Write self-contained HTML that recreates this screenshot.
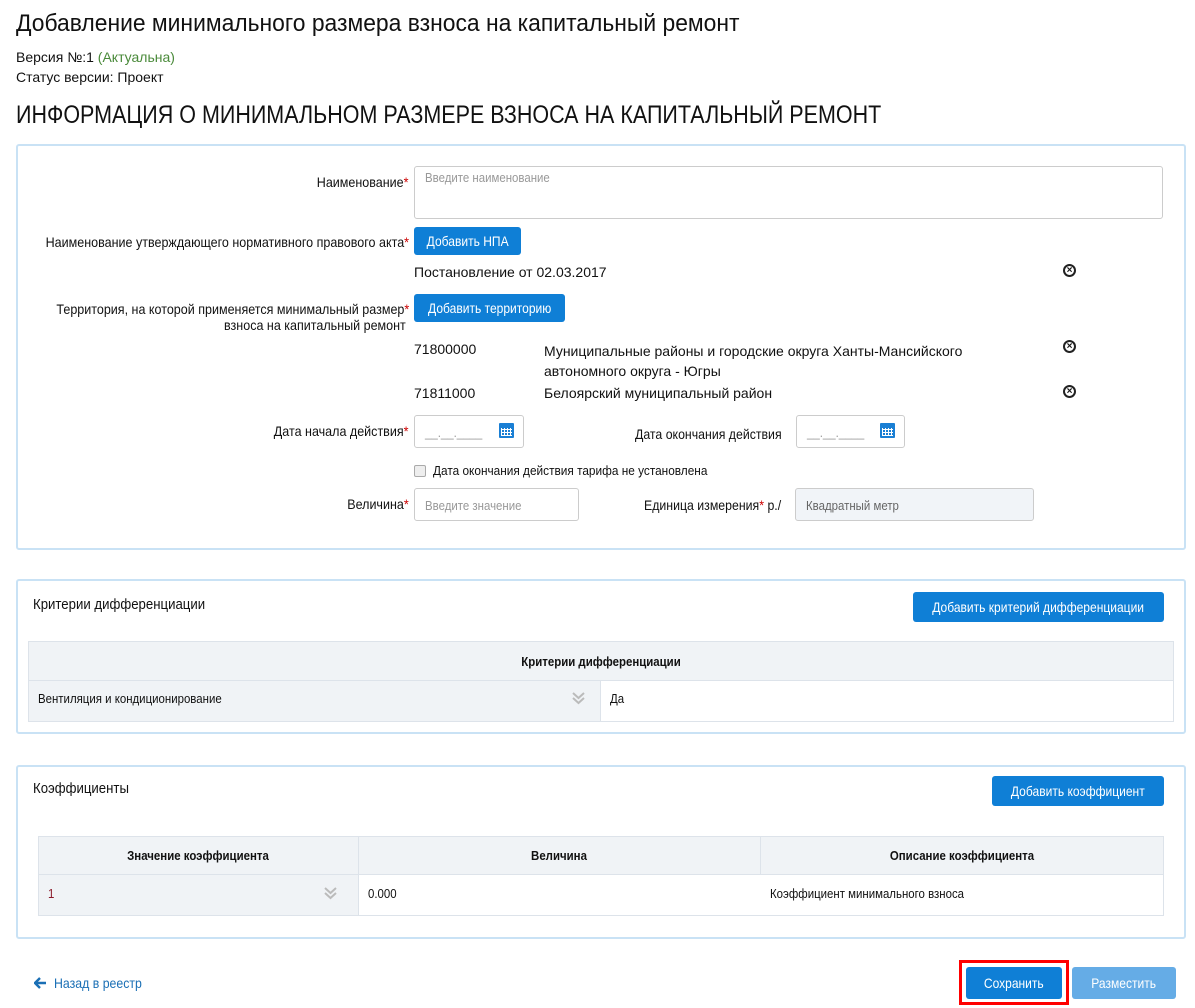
<!DOCTYPE html>
<html><head><meta charset="utf-8"><style>
*{box-sizing:border-box;margin:0;padding:0}
body{width:1195px;height:1008px;background:#fff;font-family:"Liberation Sans",sans-serif;color:#111;position:relative;overflow:hidden;font-size:14px}
.a{position:absolute;white-space:nowrap}
.n{transform:scaleX(.88);transform-origin:left center}
.nr{transform:scaleX(.895);transform-origin:right center}
.nc{transform:scaleX(.88);transform-origin:center center}
.box{position:absolute;border:2px solid #c9e2f5;border-radius:3px}
.btn{position:absolute;background:#0f7fd6;color:#fff;border-radius:3px;text-align:center;font-size:14px;white-space:nowrap}
.btn span{display:inline-block;transform:scaleX(.86)}
.inp{position:absolute;border:1px solid #ccc;border-radius:3px;background:#fff;color:#999;font-size:13px;padding-left:10px}
.inp span{display:inline-block;transform:scaleX(.88);transform-origin:left center}
.req{color:#c00}
.r{text-align:right}
.x{position:absolute;width:13px;height:13px;border:2px solid #222;border-radius:50%;font-size:10px;line-height:9px;text-align:center;font-weight:bold}
.cal{position:absolute;width:15px;height:15px;background:#1a7fd4;border-radius:1px}
.cal:after{content:"";position:absolute;left:2px;top:5px;width:11px;height:8px;background:repeating-linear-gradient(90deg,#fff 0 1px,transparent 1px 3px),repeating-linear-gradient(0deg,#fff 0 1px,transparent 1px 3px)}
</style></head><body>
<div class="a" style="left:16px;top:10px;font-size:24px;transform:scaleX(.953);transform-origin:left">Добавление минимального размера взноса на капитальный ремонт</div>
<div class="a" style="left:16px;top:49px;font-size:14px">Версия №:1 <span style="color:#4a8a3a">(Актуальна)</span></div>
<div class="a" style="left:16px;top:69px;font-size:14px">Статус версии: Проект</div>
<div class="a" style="left:16px;top:101px;font-size:25px;transform:scaleX(.86);transform-origin:left">ИНФОРМАЦИЯ О МИНИМАЛЬНОМ РАЗМЕРЕ ВЗНОСА НА КАПИТАЛЬНЫЙ РЕМОНТ</div>

<div class="box" style="left:16px;top:144px;width:1170px;height:406px"></div>
<div class="a r nr" style="right:786px;top:174px">Наименование<span class="req">*</span></div>
<div class="inp" style="left:414px;top:166px;width:749px;height:53px;padding-top:3px"><span>Введите наименование</span></div>
<div class="a r nr" style="right:786px;top:234px">Наименование утверждающего нормативного правового акта<span class="req">*</span></div>
<div class="btn" style="left:414px;top:227px;width:107px;height:28px;line-height:28px"><span>Добавить НПА</span></div>
<div class="a" style="left:414px;top:264px">Постановление от 02.03.2017</div>
<div class="x" style="left:1063px;top:264px">×</div>
<div class="a r nr" style="right:786px;top:301px;line-height:16px">Территория, на которой применяется минимальный размер<span class="req">*</span><br>взноса на капитальный ремонт&nbsp;</div>
<div class="btn" style="left:414px;top:294px;width:151px;height:28px;line-height:28px"><span>Добавить территорию</span></div>
<div class="a" style="left:414px;top:341px">71800000</div>
<div class="a" style="left:544px;top:341px;line-height:20px">Муниципальные районы и городские округа Ханты-Мансийского<br>автономного округа - Югры</div>
<div class="x" style="left:1063px;top:340px">×</div>
<div class="a" style="left:414px;top:385px">71811000</div>
<div class="a" style="left:544px;top:385px">Белоярский муниципальный район</div>
<div class="x" style="left:1063px;top:385px">×</div>
<div class="a r nr" style="right:786px;top:423px">Дата начала действия<span class="req">*</span></div>
<div class="inp" style="left:414px;top:415px;width:110px;height:33px;line-height:33px"><span>__.__.____</span></div>
<div class="cal" style="left:499px;top:423px"></div>
<div class="a n" style="left:635px;top:426px">Дата окончания действия</div>
<div class="inp" style="left:796px;top:415px;width:109px;height:33px;line-height:33px"><span>__.__.____</span></div>
<div class="cal" style="left:880px;top:423px"></div>
<div style="position:absolute;left:414px;top:465px;width:12px;height:12px;border:1px solid #aaa;border-radius:2px;background:#eee"></div>
<div class="a" style="left:433px;top:463px;font-size:13px;transform:scaleX(.91);transform-origin:left">Дата окончания действия тарифа не установлена</div>
<div class="a r nr" style="right:786px;top:496px">Величина<span class="req">*</span></div>
<div class="inp" style="left:414px;top:488px;width:165px;height:33px;line-height:33px"><span>Введите значение</span></div>
<div class="a n" style="left:644px;top:497px">Единица измерения<span class="req">*</span> р./</div>
<div class="inp" style="left:795px;top:488px;width:239px;height:33px;line-height:33px;background:#f1f4f8;color:#666"><span>Квадратный метр</span></div>

<div class="box" style="left:16px;top:579px;width:1170px;height:155px"></div>
<div class="a n" style="left:33px;top:596px;font-size:15px">Критерии дифференциации</div>
<div class="btn" style="left:913px;top:592px;width:251px;height:30px;line-height:30px"><span>Добавить критерий дифференциации</span></div>
<div style="position:absolute;left:28px;top:641px;width:1146px;height:81px;border:1px solid #dde3ea;background:#f0f3f6"></div>
<div class="a nc" style="left:28px;top:654px;width:1146px;text-align:center;font-size:13px;font-weight:bold">Критерии дифференциации</div>
<div style="position:absolute;left:28px;top:680px;width:1146px;height:1px;background:#dde3ea"></div>
<div style="position:absolute;left:600px;top:681px;width:573px;height:40px;background:#fff;border-left:1px solid #dde3ea"></div>
<div class="a n" style="left:38px;top:691px;font-size:13px">Вентиляция и кондиционирование</div>
<svg class="a" style="left:572px;top:692px" width="13" height="13" viewBox="0 0 13 13"><path d="M1 1l5.5 5 5.5-5M1 6l5.5 5 5.5-5" fill="none" stroke="#bbb" stroke-width="2"/></svg>
<div class="a n" style="left:610px;top:691px;font-size:13px">Да</div>

<div class="box" style="left:16px;top:765px;width:1170px;height:174px"></div>
<div class="a n" style="left:33px;top:780px;font-size:15px">Коэффициенты</div>
<div class="btn" style="left:992px;top:776px;width:172px;height:30px;line-height:30px"><span>Добавить коэффициент</span></div>
<div style="position:absolute;left:38px;top:836px;width:1126px;height:80px;border:1px solid #dde3ea;background:#f0f3f6"></div>
<div style="position:absolute;left:38px;top:874px;width:1126px;height:1px;background:#dde3ea"></div>
<div style="position:absolute;left:358px;top:837px;width:1px;height:78px;background:#dde3ea"></div>
<div style="position:absolute;left:760px;top:837px;width:1px;height:37px;background:#dde3ea"></div>
<div style="position:absolute;left:359px;top:875px;width:804px;height:40px;background:#fff"></div>
<div class="a nc" style="left:38px;top:848px;width:320px;text-align:center;font-size:13px;font-weight:bold">Значение коэффициента</div>
<div class="a nc" style="left:358px;top:848px;width:402px;text-align:center;font-size:13px;font-weight:bold">Величина</div>
<div class="a nc" style="left:760px;top:848px;width:404px;text-align:center;font-size:13px;font-weight:bold">Описание коэффициента</div>
<div class="a n" style="left:48px;top:886px;font-size:13px;color:#8b1a2b">1</div>
<svg class="a" style="left:324px;top:887px" width="13" height="13" viewBox="0 0 13 13"><path d="M1 1l5.5 5 5.5-5M1 6l5.5 5 5.5-5" fill="none" stroke="#bbb" stroke-width="2"/></svg>
<div class="a n" style="left:368px;top:886px;font-size:13px">0.000</div>
<div class="a n" style="left:770px;top:886px;font-size:13px">Коэффициент минимального взноса</div>

<svg class="a" style="left:34px;top:977px" width="13" height="12" viewBox="0 0 13 12"><path d="M6 1L1 6l5 5M1 6h11" fill="none" stroke="#1a6fb5" stroke-width="2.4"/></svg>
<div class="a n" style="left:54px;top:975px;color:#1a6fb5;font-size:14px">Назад в реестр</div>
<div style="position:absolute;left:959px;top:960px;width:110px;height:45px;border:3px solid #f00"></div>
<div class="btn" style="left:966px;top:967px;width:96px;height:32px;line-height:32px"><span>Сохранить</span></div>
<div class="btn" style="left:1072px;top:967px;width:104px;height:32px;line-height:32px;background:#65ace6"><span>Разместить</span></div>
</body></html>
